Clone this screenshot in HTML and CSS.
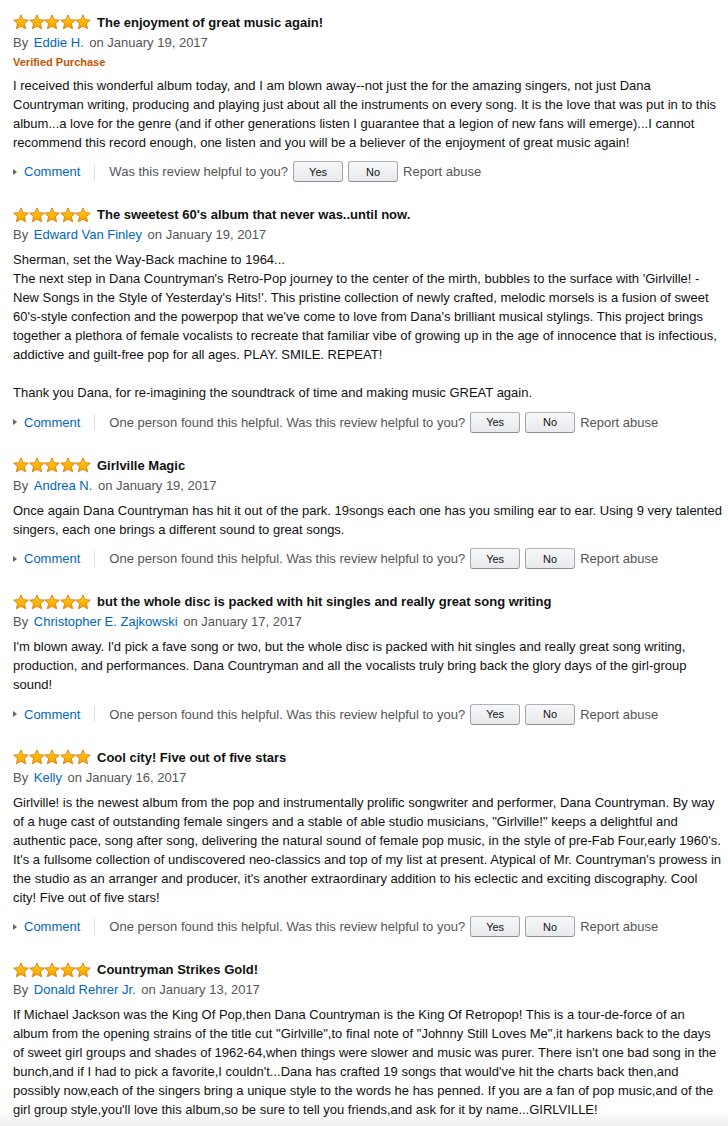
FILE: index.html
```html
<!DOCTYPE html>
<html lang="en">
<head>
<meta charset="utf-8">
<title>Customer Reviews</title>
<link rel="stylesheet" href="styles.css">
</head>
<body>
<svg width="0" height="0" class="defs" aria-hidden="true">
  <defs>
    <linearGradient id="sg" x1="0" y1="0" x2="0" y2="1">
      <stop offset="0" stop-color="#ffd84a"/>
      <stop offset="0.55" stop-color="#ffb400"/>
      <stop offset="1" stop-color="#f7a000"/>
    </linearGradient>
    <symbol id="star" viewBox="0 0 16 16">
      <polygon points="8,0.9 10.1,5.7 15.3,6.1 11.4,9.6 12.6,14.8 8,12.1 3.4,14.8 4.6,9.6 0.7,6.1 5.9,5.7" fill="url(#sg)" stroke="#de7b00" stroke-width="0.9" stroke-linejoin="round"/>
    </symbol>
  </defs>
</svg>

<main class="reviews">

  <section class="review">
    <div class="head">
      <span class="stars"><svg><use href="#star"/></svg><svg><use href="#star"/></svg><svg><use href="#star"/></svg><svg><use href="#star"/></svg><svg><use href="#star"/></svg></span>
      <span class="title">The enjoyment of great music again!</span>
    </div>
    <div class="byline">By <a class="author">Eddie H.</a> on January 19, 2017</div>
    <div class="verified">Verified Purchase</div>
    <p class="body verified-body">I received this wonderful album today, and I am blown away--not just the for the amazing singers, not just Dana<br>Countryman writing, producing and playing just about all the instruments on every song. It is the love that was put in to this<br>album...a love for the genre (and if other generations listen I guarantee that a legion of new fans will emerge)...I cannot<br>recommend this record enough, one listen and you will be a believer of the enjoyment of great music again!</p>
    <div class="actions">
      <span class="tri"></span><a class="comment">Comment</a><span class="sep"></span>
      <span class="helpful">Was this review helpful to you?</span>
      <button class="btn">Yes</button><button class="btn">No</button>
      <span class="report">Report abuse</span>
    </div>
  </section>

  <section class="review r2">
    <div class="head">
      <span class="stars"><svg><use href="#star"/></svg><svg><use href="#star"/></svg><svg><use href="#star"/></svg><svg><use href="#star"/></svg><svg><use href="#star"/></svg></span>
      <span class="title">The sweetest 60's album that never was..until now.</span>
    </div>
    <div class="byline">By <a class="author">Edward Van Finley</a> on January 19, 2017</div>
    <p class="body">Sherman, set the Way-Back machine to 1964...<br>The next step in Dana Countryman's Retro-Pop journey to the center of the mirth, bubbles to the surface with 'Girlville! -<br>New Songs in the Style of Yesterday's Hits!'. This pristine collection of newly crafted, melodic morsels is a fusion of sweet<br>60's-style confection and the powerpop that we've come to love from Dana's brilliant musical stylings. This project brings<br>together a plethora of female vocalists to recreate that familiar vibe of growing up in the age of innocence that is infectious,<br>addictive and guilt-free pop for all ages. PLAY. SMILE. REPEAT!<br><br>Thank you Dana, for re-imagining the soundtrack of time and making music GREAT again.</p>
    <div class="actions">
      <span class="tri"></span><a class="comment">Comment</a><span class="sep"></span>
      <span class="helpful">One person found this helpful. Was this review helpful to you?</span>
      <button class="btn">Yes</button><button class="btn">No</button>
      <span class="report">Report abuse</span>
    </div>
  </section>

  <section class="review r3">
    <div class="head">
      <span class="stars"><svg><use href="#star"/></svg><svg><use href="#star"/></svg><svg><use href="#star"/></svg><svg><use href="#star"/></svg><svg><use href="#star"/></svg></span>
      <span class="title">Girlville Magic</span>
    </div>
    <div class="byline">By <a class="author">Andrea N.</a> on January 19, 2017</div>
    <p class="body">Once again Dana Countryman has hit it out of the park. 19songs each one has you smiling ear to ear. Using 9 very talented<br>singers, each one brings a different sound to great songs.</p>
    <div class="actions">
      <span class="tri"></span><a class="comment">Comment</a><span class="sep"></span>
      <span class="helpful">One person found this helpful. Was this review helpful to you?</span>
      <button class="btn">Yes</button><button class="btn">No</button>
      <span class="report">Report abuse</span>
    </div>
  </section>

  <section class="review r4">
    <div class="head">
      <span class="stars"><svg><use href="#star"/></svg><svg><use href="#star"/></svg><svg><use href="#star"/></svg><svg><use href="#star"/></svg><svg><use href="#star"/></svg></span>
      <span class="title">but the whole disc is packed with hit singles and really great song writing</span>
    </div>
    <div class="byline">By <a class="author">Christopher E. Zajkowski</a> on January 17, 2017</div>
    <p class="body">I'm blown away. I'd pick a fave song or two, but the whole disc is packed with hit singles and really great song writing,<br>production, and performances. Dana Countryman and all the vocalists truly bring back the glory days of the girl-group<br>sound!</p>
    <div class="actions">
      <span class="tri"></span><a class="comment">Comment</a><span class="sep"></span>
      <span class="helpful">One person found this helpful. Was this review helpful to you?</span>
      <button class="btn">Yes</button><button class="btn">No</button>
      <span class="report">Report abuse</span>
    </div>
  </section>

  <section class="review r5">
    <div class="head">
      <span class="stars"><svg><use href="#star"/></svg><svg><use href="#star"/></svg><svg><use href="#star"/></svg><svg><use href="#star"/></svg><svg><use href="#star"/></svg></span>
      <span class="title">Cool city! Five out of five stars</span>
    </div>
    <div class="byline">By <a class="author">Kelly</a> on January 16, 2017</div>
    <p class="body">Girlville! is the newest album from the pop and instrumentally prolific songwriter and performer, Dana Countryman. By way<br>of a huge cast of outstanding female singers and a stable of able studio musicians, "Girlville!" keeps a delightful and<br>authentic pace, song after song, delivering the natural sound of female pop music, in the style of pre-Fab Four,early 1960's.<br>It's a fullsome collection of undiscovered neo-classics and top of my list at present. Atypical of Mr. Countryman's prowess in<br>the studio as an arranger and producer, it's another extraordinary addition to his eclectic and exciting discography. Cool<br>city! Five out of five stars!</p>
    <div class="actions">
      <span class="tri"></span><a class="comment">Comment</a><span class="sep"></span>
      <span class="helpful">One person found this helpful. Was this review helpful to you?</span>
      <button class="btn">Yes</button><button class="btn">No</button>
      <span class="report">Report abuse</span>
    </div>
  </section>

  <section class="review r6">
    <div class="head">
      <span class="stars"><svg><use href="#star"/></svg><svg><use href="#star"/></svg><svg><use href="#star"/></svg><svg><use href="#star"/></svg><svg><use href="#star"/></svg></span>
      <span class="title">Countryman Strikes Gold!</span>
    </div>
    <div class="byline">By <a class="author">Donald Rehrer Jr.</a> on January 13, 2017</div>
    <p class="body">If Michael Jackson was the King Of Pop,then Dana Countryman is the King Of Retropop! This is a tour-de-force of an<br>album from the opening strains of the title cut "Girlville",to final note of "Johnny Still Loves Me",it harkens back to the days<br>of sweet girl groups and shades of 1962-64,when things were slower and music was purer. There isn't one bad song in the<br>bunch,and if I had to pick a favorite,I couldn't...Dana has crafted 19 songs that would've hit the charts back then,and<br>possibly now,each of the singers bring a unique style to the words he has penned. If you are a fan of pop music,and of the<br>girl group style,you'll love this album,so be sure to tell you friends,and ask for it by name...GIRLVILLE!</p>
  </section>

</main>
</body>
</html>
```

FILE: styles.css
```css
html, body {
  margin: 0;
  padding: 0;
}
body {
  width: 728px;
  height: 1126px;
  overflow: hidden;
  background: linear-gradient(to bottom, #ffffff 0, #ffffff 1112px, #ededed 1126px);
  font-family: "Liberation Sans", Arial, sans-serif;
  font-size: 13px;
  line-height: 19px;
  color: #111;
}
.defs {
  position: absolute;
  width: 0;
  height: 0;
}
.reviews {
  padding: 12.5px 0 0 13px;
}
.review + .review {
  margin-top: 22.6px;
}
.head {
  display: flex;
  align-items: center;
  height: 19px;
  white-space: nowrap;
}
.stars {
  display: flex;
  width: 78px;
  height: 16px;
  margin-right: 6px;
}
.stars svg {
  width: 16px;
  height: 16px;
  margin-right: -0.4px;
}
.title {
  font-weight: bold;
  color: #111;
}
.byline {
  margin-top: 1px;
  color: #555;
  white-space: nowrap;
}
.author {
  color: #0066c0;
  margin: 0 2px;
}
.verified {
  margin-top: 1px;
  font-size: 11px;
  font-weight: bold;
  color: #c45500;
  line-height: 19px;
}
.body {
  margin: 6px 0 0;
  white-space: nowrap;
}
.body.verified-body {
  margin-top: 4px;
}
.actions {
  display: flex;
  align-items: center;
  height: 22px;
  margin-top: 9px;
  color: #555;
  white-space: nowrap;
}
.tri {
  width: 0;
  height: 0;
  border-top: 3.5px solid transparent;
  border-bottom: 3.5px solid transparent;
  border-left: 4px solid #666;
  margin-right: 7px;
}
.comment {
  color: #0066c0;
}
.sep {
  width: 1px;
  height: 16px;
  background: #ddd;
  margin: 0 14px 0 14px;
}
.btn {
  width: 50px;
  height: 21px;
  padding: 0;
  font-family: "Liberation Sans", Arial, sans-serif;
  font-size: 11px;
  color: #111;
  background: linear-gradient(to bottom, #f7f8fa, #e7e9ec);
  border: 1px solid #adb1b8;
  border-color: #adb1b8 #a2a6ac #8d9096;
  border-radius: 3px;
  margin-left: 5px;
}
.report {
  margin-left: 5px;
}
```
